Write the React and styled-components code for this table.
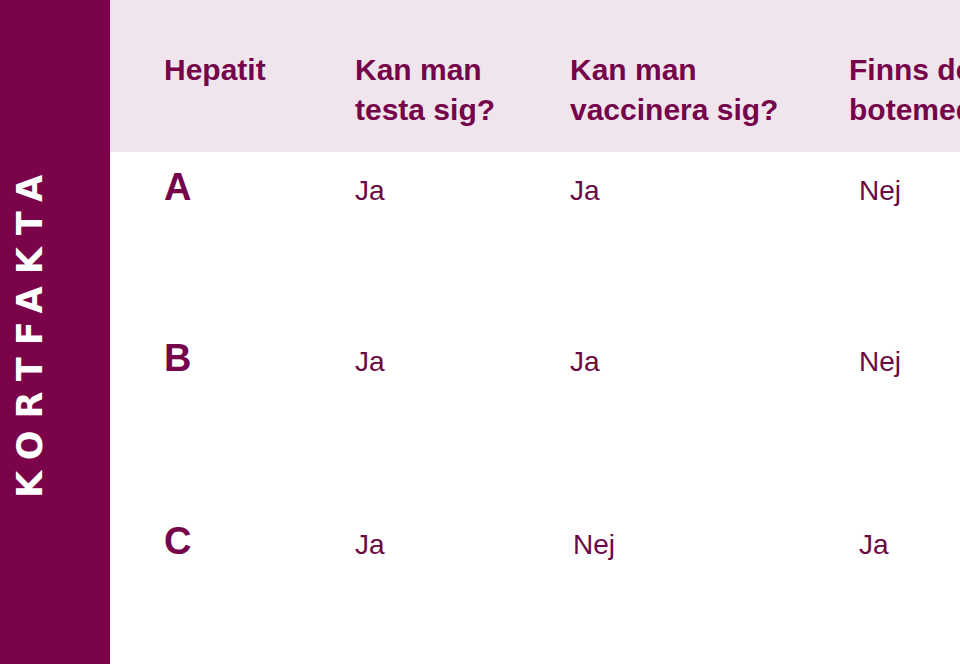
import React from 'react';
import styled, { createGlobalStyle } from 'styled-components';

const rows = [
    { name: 'A', height: 171, cells: ['Ja', 'Ja', 'Nej'] },
    { name: 'B', height: 183, cells: ['Ja', 'Ja', 'Nej'] },
    { name: 'C', height: 158, cells: ['Ja', 'Nej', 'Ja'] },
];

const App = () => {
    return (
        <Page>
            <GlobalStyle />
            <Sidebar>
                <SideTitle>KORTFAKTA</SideTitle>
            </Sidebar>
            <Main>
                <HeaderRow>
                    <HeadCell>Hepatit</HeadCell>
                    <HeadCell>Kan man<br />testa sig?</HeadCell>
                    <HeadCell>Kan man<br />vaccinera sig?</HeadCell>
                    <HeadCell>Finns det<br />botemedel?</HeadCell>
                </HeaderRow>
                {rows.map((row) => (
                    <Row key={row.name} $height={row.height}>
                        <Letter>{row.name}</Letter>
                        {row.cells.map((cell, i) => (
                            <Cell key={i} $shift={i === 2 ? 10 : (cell === 'Nej' ? 3 : 0)}>{cell}</Cell>
                        ))}
                    </Row>
                ))}
            </Main>
        </Page>
    );
}

const GlobalStyle = createGlobalStyle`
html, body {
    margin: 0;
    padding: 0;
    background: #ffffff;
    overflow: hidden;
}
body {
    font-family: "Liberation Sans", Arial, sans-serif;
}
`

const Page = styled.div`
display: flex;
width: 960px;
height: 664px;
overflow: hidden;
`

const Sidebar = styled.aside`
flex: 0 0 110px;
background: #7b0349;
display: flex;
align-items: center;
justify-content: center;
padding-right: 50px;
box-sizing: border-box;
`

// rotated half a turn so it reads bottom to top
const SideTitle = styled.h2`
margin: 0;
writing-mode: vertical-rl;
transform: rotate(180deg);
color: #ffffff;
font-family: "DejaVu Sans", sans-serif;
font-weight: bold;
font-size: 35px;
letter-spacing: 12px;
line-height: 1;
padding-top: 4px;
`

const Main = styled.main`
flex: 1;
display: flex;
flex-direction: column;
min-width: 0;
`

const grid = `
display: grid;
grid-template-columns: 191px 215px 279px 400px;
padding-left: 54px;
`

const HeaderRow = styled.div`
${grid}
background: #f0e5ed;
height: 152px;
box-sizing: border-box;
padding-top: 50px;
`

const HeadCell = styled.div`
color: #75044a;
font-weight: bold;
font-size: 30px;
line-height: 40px;
white-space: nowrap;
`

const Row = styled.div`
${grid}
height: ${(p) => p.$height}px;
box-sizing: border-box;
padding-top: 13px;
align-items: baseline;
align-content: start;
`

const Letter = styled.div`
color: #75044a;
font-weight: bold;
font-size: 38px;
line-height: 44px;
`

const Cell = styled.div`
color: #6a0a45;
font-size: 28px;
line-height: 44px;
padding-left: ${(p) => p.$shift}px;
`

export default App
